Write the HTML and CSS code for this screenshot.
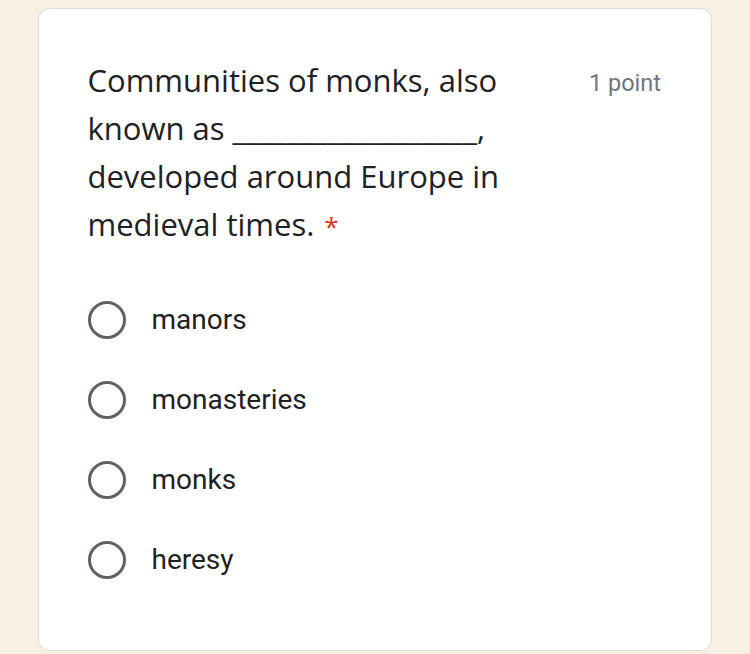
FILE: index.html
```html
<!DOCTYPE html>
<html>
<head>
<meta charset="utf-8">
<link rel="stylesheet" href="styles.css">
</head>
<body>
<div class="card">
  <div class="header">
    <div class="question">Communities of monks, also known as __________________, developed around Europe in medieval times.<span class="req">*</span></div>
    <div class="points">1 point</div>
  </div>
  <div class="options">
    <div class="option"><span class="radio"></span><span class="label">manors</span></div>
    <div class="option"><span class="radio"></span><span class="label">monasteries</span></div>
    <div class="option"><span class="radio"></span><span class="label">monks</span></div>
    <div class="option"><span class="radio"></span><span class="label">heresy</span></div>
  </div>
</div>
</body>
</html>
```
FILE: styles.css
```css
html, body {
  margin: 0;
  padding: 0;
  background: #f6efe2;
}
body {
  padding: 8px 38px 0 38px;
  height: 654px;
  box-sizing: border-box;
  overflow: hidden;
}
.card {
  background: #fff;
  border: 1.5px solid #dadce0;
  border-radius: 12px;
  height: 643px;
  box-sizing: border-box;
  padding: 46.5px 50px 0 48.5px;
}
.header {
  display: flex;
  justify-content: space-between;
  align-items: flex-start;
}
.question {
  width: 425px;
  font-family: "Open Sans", sans-serif;
  font-size: 31px;
  line-height: 48px;
  color: #202124;
}
.req {
  color: #d93025;
  font-size: 26px;
  line-height: 1;
  margin-left: 10px;
}
.points {
  font-family: Roboto, sans-serif;
  font-size: 23.5px;
  line-height: 48px;
  padding-top: 3px;
  color: #70757a;
}
.options {
  margin-top: 32px;
  display: flex;
  flex-direction: column;
}
.option {
  display: flex;
  align-items: center;
  height: 80px;
}
.radio {
  width: 38px;
  height: 38px;
  box-sizing: border-box;
  border: 3.5px solid #5f6368;
  border-radius: 50%;
  flex: none;
}
.label {
  margin-left: 26px;
  font-family: Roboto, sans-serif;
  font-size: 28px;
  color: #202124;
}
```
